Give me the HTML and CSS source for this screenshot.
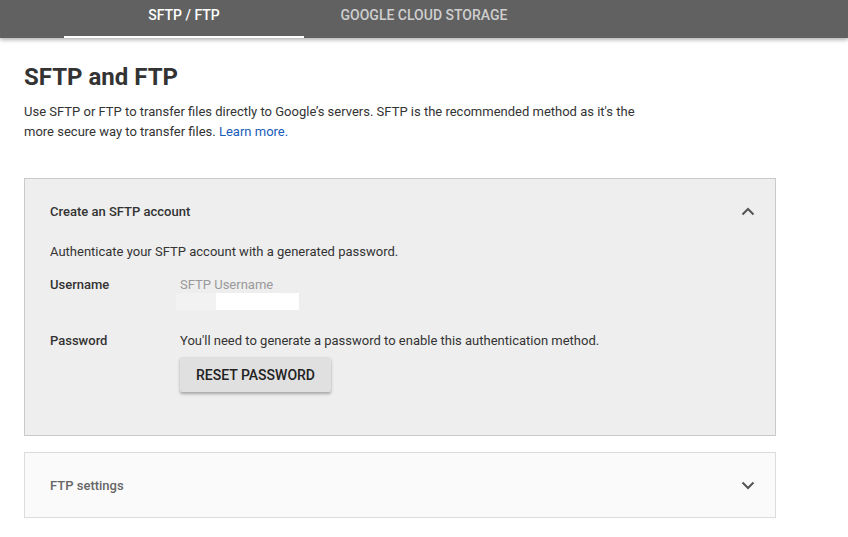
FILE: index.html
```html
<!DOCTYPE html>
<html lang="en">
<head>
    <meta charset="UTF-8">
    <meta name="viewport" content="width=device-width, initial-scale=1.0">
    <title>SFTP and FTP</title>
    <link rel="stylesheet" href="styles.css">
</head>
<body>

<div class="tabbar">
    <div class="tab tab-active">SFTP / FTP</div>
    <div class="tab">Google Cloud Storage</div>
</div>

<div class="content">
    <h1 class="title">SFTP and FTP</h1>
    <p class="intro">Use SFTP or FTP to transfer files directly to Google’s servers. SFTP is the recommended method as it's the more secure way to transfer files. <a href="#">Learn more.</a></p>

    <div class="panel panel-open">
        <div class="panel-head">
            <span class="panel-title">Create an SFTP account</span>
            <svg class="chevron" width="14" height="9" viewBox="0 0 14 9"><path d="M1.5 7.5 L7 2 L12.5 7.5" fill="none" stroke="#555" stroke-width="2"/></svg>
        </div>
        <div class="panel-body">
            <p class="panel-note">Authenticate your SFTP account with a generated password.</p>
            <div class="field">
                <div class="field-label">Username</div>
                <div class="field-value">
                    <div class="placeholder">SFTP Username</div>
                    <div class="user-box">
                        <span class="box-dim"></span>
                        <span class="box-white"></span>
                    </div>
                </div>
            </div>
            <div class="field">
                <div class="field-label">Password</div>
                <div class="field-value">
                    <div>You'll need to generate a password to enable this authentication method.</div>
                    <button class="btn">RESET PASSWORD</button>
                </div>
            </div>
        </div>
    </div>

    <div class="panel panel-closed">
        <div class="panel-head">
            <span class="panel-title muted">FTP settings</span>
            <svg class="chevron" width="14" height="9" viewBox="0 0 14 9"><path d="M1.5 1.5 L7 7 L12.5 1.5" fill="none" stroke="#555" stroke-width="2"/></svg>
        </div>
    </div>
</div>

</body>
</html>
```

FILE: styles.css
```css
body {
    margin: 0;
    padding: 0;
    font-family: Roboto, "Liberation Sans", Arial, sans-serif;
    font-size: 13px;
    color: #333;
    background: #fff;
}

.tabbar {
    display: flex;
    height: 38px;
    padding-left: 64px;
    background-color: #616161;
    box-shadow: 0 2px 4px rgba(0, 0, 0, 0.3);
}

.tab {
    width: 240px;
    box-sizing: border-box;
    padding-top: 7px;
    text-align: center;
    font-size: 14px;
    font-weight: 500;
    text-transform: uppercase;
    color: #cfcfcf;
}

.tab-active {
    color: #fff;
    border-bottom: 2px solid #fff;
}

.content {
    padding: 0 24px;
    width: 752px;
}

.title {
    margin: 24px 0 10px;
    font-size: 24px;
    font-weight: 700;
    line-height: 30px;
    color: #333;
}

.intro {
    margin: 0 0 36px;
    width: 620px;
    line-height: 20px;
}

.intro a {
    color: #1a5cba;
    text-decoration: none;
}

.panel {
    border: 1px solid #d0d0d0;
    margin-bottom: 16px;
}

.panel-open {
    background-color: #eee;
    border-color: #cacaca;
}

.panel-closed {
    background-color: #fafafa;
    border-color: #dcdcdc;
}

.panel-head {
    display: flex;
    justify-content: space-between;
    align-items: center;
    height: 64px;
    padding: 0 20px 0 25px;
}

.panel-title {
    font-weight: 500;
    color: #333;
}

.panel-title.muted {
    color: #666;
}

.panel-body {
    padding: 0 25px 43px;
}

.panel-note {
    margin: 0 0 15px;
    line-height: 18px;
}

.field {
    display: flex;
    margin-bottom: 22px;
}

.field:last-child {
    margin-bottom: 0;
}

.field-label {
    width: 130px;
    font-weight: 500;
    line-height: 18px;
}

.field-value {
    line-height: 18px;
}

.placeholder {
    color: #999;
}

.user-box {
    display: flex;
    margin-left: -4px;
    margin-top: -1px;
    height: 17px;
}

.box-dim {
    width: 40px;
    background-color: #f2f2f2;
}

.box-white {
    width: 83px;
    background-color: #fff;
}

.btn {
    display: block;
    margin-top: 7px;
    padding: 0 16px;
    height: 35px;
    border: none;
    border-radius: 2px;
    background-color: #e0e0e0;
    box-shadow: 0 2px 3px rgba(0, 0, 0, 0.3);
    font-family: Roboto, "Liberation Sans", Arial, sans-serif;
    font-size: 14px;
    font-weight: 500;
    color: #222;
}
```
